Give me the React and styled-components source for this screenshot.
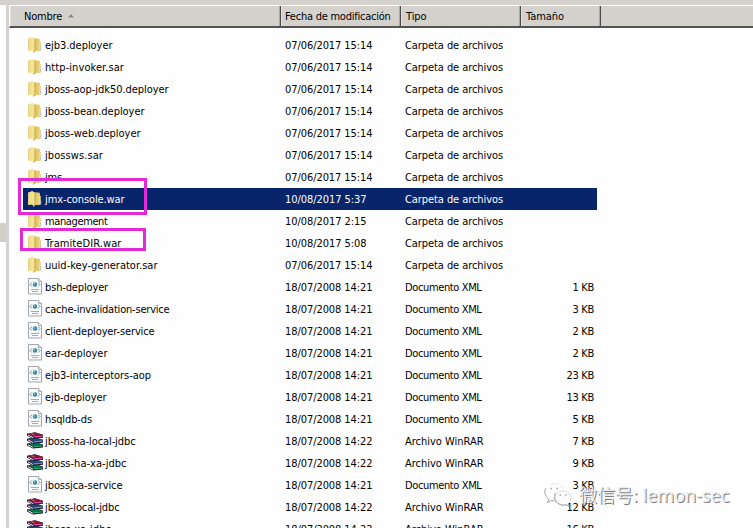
import React from 'react';
import styled, { createGlobalStyle } from 'styled-components';

const FONT = '"DejaVu Sans Condensed", "DejaVu Sans", sans-serif';

const GlobalStyle = createGlobalStyle`
  body { margin: 0; overflow: hidden; background: #fefefe; }
  *, *::before, *::after { box-sizing: border-box; }
`;

const Window = styled.div`
  position: relative;
  width: 753px;
  height: 528px;
  overflow: hidden;
  display: flex;
  flex-direction: column;
  background: #fefefe;
  color: #000;
  font: 11px/22px ${FONT};
  font-stretch: condensed;
`;

const TopEdge = styled.div`
  flex: none;
  height: 5px;
  background: #d5d2ce;
`;

const Body = styled.div`
  flex: 1;
  display: flex;
  min-height: 0;
`;

const NavPane = styled.div`
  flex: none;
  width: 6px;
  padding-top: 218px;
`;

const NavMark = styled.div`
  height: 19px;
  background: #d2cfcb;
`;

const Splitter = styled.div`
  flex: none;
  width: 3px;
  background: #d3d3d3;
`;

const FileList = styled.div`
  flex: 1;
  min-width: 0;
`;

const Header = styled.div`
  display: flex;
  height: 23px;
  background: #d5d2ce;
  border-top: 1px solid #fff;
  border-left: 1px solid #fff;
  border-bottom: 2px solid #555351;
`;

const HeaderCell = styled.div`
  flex: none;
  display: flex;
  align-items: center;
  width: ${(p) => p.$width}px;
  padding-top: 2px;
  padding-left: ${(p) => p.$pad}px;
  border-right: 1px solid #4b4947;
  box-shadow: inset 1px 0 #e6e4e1, inset -1px 0 #aaa7a3;
`;

const SortArrow = styled.svg`
  margin-left: 6px;
  margin-top: -3px;
`;

const Rows = styled.div`
  padding: 6px 0 0 14px;
`;

const Row = styled.div`
  display: grid;
  grid-template-columns: 262px 120px 120px 72px;
  width: 574px;
  height: 22px;
  line-height: 24px;
  color: ${(p) => (p.$selected ? '#fff' : '#000')};
  background: ${(p) => (p.$selected ? '#08246b' : 'transparent')};
`;

const NameCell = styled.div`
  display: flex;
  height: 24px;
`;

const Cell = styled.div`
  text-align: ${(p) => p.$align || 'left'};
  padding-right: ${(p) => (p.$align ? 3 : 0)}px;
`;

const IconBox = styled.div`
  flex: none;
  display: flex;
  align-items: flex-start;
  width: 22px;
  padding-top: 2px;
  padding-left: ${(p) => p.$pad}px;
`;

const Label = styled.span`
  white-space: pre;
`;

const Highlight = styled.div`
  position: absolute;
  left: ${(p) => p.$x}px;
  top: ${(p) => p.$y}px;
  width: ${(p) => p.$w}px;
  height: ${(p) => p.$h}px;
  border: 3px solid #e329d9;
`;

const Watermark = styled.div`
  position: absolute;
  left: 543px;
  top: 481px;
  display: flex;
  align-items: center;
  height: 28px;
`;

const WatermarkText = styled.span`
  margin-left: 7px;
  white-space: pre;
  font: 18px/28px "Noto Sans", "Noto Sans CJK SC", sans-serif;
  font-stretch: normal;
  color: #ececec;
  text-shadow: 1px 1px 0 #7d7d7d;
`;

const pen = document.createElement('canvas').getContext('2d');

/* Tracks a label so that its text takes the given width. */
function Text({ children, w }) {
  pen.font = `condensed 11px ${FONT}`;
  const natural = pen.measureText(children).width;
  return <Label style={{ letterSpacing: `${(w - natural) / children.length}px` }}>{children}</Label>;
}

function FolderIcon() {
  return (
    <svg width="14" height="17" viewBox="0 0 14 17">
      <path d="M0 2.5 5 1v13.500L0 15z" fill="#f0df8e" />
      <path d="M.4 3v11.500" stroke="#dccb86" strokeWidth=".8" />
      <path d="M6 2.500h5l1 1v10.500l-1 1H6z" fill="#e8cf72" />
      <path d="M10.400 5.500 12.600 6v8l-2.200 1z" fill="#f0dc8a" stroke="#d9c27a" strokeWidth=".5" />
      <path d="M3.200 1.200 7.200 2.500v12.500L5.500 16.500 3.800 14z" fill="#f5e493" />
      <path d="M7 2.500v12.500L5.400 16.400" fill="none" stroke="#c4a544" strokeWidth="1.100" />
      <path d="M8.800 3.500v10" stroke="#dfc25d" strokeWidth=".8" />
      <path d="M12.700 10.500v4" stroke="#b4cbc8" />
    </svg>
  );
}

function XmlIcon() {
  return (
    <svg width="14" height="17" viewBox="0 0 14 17">
      <path d="M.5.5h10l3 3v12.500H.5z" fill="#f8fafb" stroke="#a3a7aa" />
      <path d="M10.500.5v3h3" fill="#e2e5e7" stroke="#a8adb0" />
      <path d="M3.800 4.500 2 6.500l1.800 2M10.200 4.500l1.800 2-1.800 2" fill="none" stroke="#758cab" />
      <circle cx="7" cy="6.500" r="2.200" fill="#398194" />
      <circle cx="6.400" cy="6" r=".9" fill="#7ec7b9" />
      <path d="M3 11.500h8M4 13.500h6" stroke="#a7abb0" />
    </svg>
  );
}

function Book({ y, cover, shine }) {
  return (
    <g transform={`translate(0 ${y})`}>
      <path d="M0 1.500 8 0 16 2.500V5.500L6 6.500 0 3.500z" fill="#271a28" />
      <path d="M1 1.500 8 .3 15.500 2.500 6 4z" fill={cover} />
      <path d="M1 2.700 6 5.300" stroke="#eee8ed" strokeWidth="1" />
      <path d="M6.500 4.600 15.500 3.800" stroke={shine} strokeWidth="1.300" />
    </g>
  );
}

function RarIcon() {
  return (
    <svg width="16" height="17" viewBox="0 0 16 17">
      <Book y={10} cover="#08784f" shine="#30a978" />
      <Book y={5.200} cover="#24447e" shine="#3aa4df" />
      <Book y={0.300} cover="#8d1735" shine="#e04bb0" />
      <path d="M4 1.600 7.500 3" stroke="#c48a70" strokeWidth=".8" />
    </svg>
  );
}

const ICONS = { folder: FolderIcon, xml: XmlIcon, rar: RarIcon };
const TYPES = {
  folder: ['Carpeta de archivos', 98],
  xml: ['Documento XML', 76.5],
  rar: ['Archivo WinRAR', 78.5],
};

const FILES = [
  ['folder', 'ejb3.deployer', 67.5, '07/06/2017 15:14'],
  ['folder', 'http-invoker.sar', 79, '07/06/2017 15:14'],
  ['folder', 'jboss-aop-jdk50.deployer', 123.5, '07/06/2017 15:14'],
  ['folder', 'jboss-bean.deployer', 99.5, '07/06/2017 15:14'],
  ['folder', 'jboss-web.deployer', 95.5, '07/06/2017 15:14'],
  ['folder', 'jbossws.sar', 58, '07/06/2017 15:14'],
  ['folder', 'jms', 17, '07/06/2017 15:14'],
  ['folder', 'jmx-console.war', 79.5, '10/08/2017 5:37'],
  ['folder', 'management', 62.5, '10/08/2017 2:15'],
  ['folder', 'TramiteDIR.war', 76.5, '10/08/2017 5:08'],
  ['folder', 'uuid-key-generator.sar', 112.5, '07/06/2017 15:14'],
  ['xml', 'bsh-deployer', 63, '18/07/2008 14:21', '1 KB'],
  ['xml', 'cache-invalidation-service', 124.5, '18/07/2008 14:21', '3 KB'],
  ['xml', 'client-deployer-service', 109.5, '18/07/2008 14:21', '2 KB'],
  ['xml', 'ear-deployer', 62.5, '18/07/2008 14:21', '2 KB'],
  ['xml', 'ejb3-interceptors-aop', 106, '18/07/2008 14:21', '23 KB'],
  ['xml', 'ejb-deployer', 61.5, '18/07/2008 14:21', '13 KB'],
  ['xml', 'hsqldb-ds', 47, '18/07/2008 14:21', '5 KB'],
  ['rar', 'jboss-ha-local-jdbc', 90.5, '18/07/2008 14:22', '7 KB'],
  ['rar', 'jboss-ha-xa-jdbc', 81.5, '18/07/2008 14:22', '9 KB'],
  ['xml', 'jbossjca-service', 77.5, '18/07/2008 14:21', '3 KB'],
  ['rar', 'jboss-local-jdbc', 74.5, '18/07/2008 14:22', '12 KB'],
  ['rar', 'jboss-xa-jdbc', 66, '18/07/2008 14:22', '16 KB'],
];

function FileRow({ file }) {
  const [kind, name, width, date, size] = file;
  const Icon = ICONS[kind];
  return (
    <Row $selected={name === 'jmx-console.war'}>
      <NameCell>
        <IconBox $pad={kind === 'rar' ? 4 : 5}><Icon /></IconBox>
        <Text w={width}>{name}</Text>
      </NameCell>
      <Cell><Text w={date.length === 16 ? 87.5 : 81.5}>{date}</Text></Cell>
      <Cell><Text w={TYPES[kind][1]}>{TYPES[kind][0]}</Text></Cell>
      <Cell $align="right">{size && <Text w={size.length === 5 ? 27.5 : 21.5}>{size}</Text>}</Cell>
    </Row>
  );
}

function ChatLogo() {
  return (
    <svg width="29" height="28" viewBox="0 0 29 28" fill="#fdfdfd" stroke="#a0a0a0" strokeWidth=".8">
      <path d="M3 7C.8 10 1.500 15 5.800 18L4.500 21.500l4-2 3 .4" stroke="#8f8f8f" />
      <path d="M8 3.500c4-1.800 10-.5 12 4" fill="none" stroke="#cfcfcf" strokeDasharray="3 2" />
      <path d="M20 10c-4.800 0-8.500 3-8.500 7s3.700 7.200 8.500 7.200c1 0 2-.1 3-.5l3 1.600-.8-2.700c1.900-1.300 3-3.300 3-5.600 0-4-3.600-7-8.200-7z" stroke="#cfcfcf" />
      <path d="M12.500 12C10.500 16 12 23 20 24.200c1 0 2-.1 3-.5l3 1.600-.8-2.700" fill="none" stroke="#8f8f8f" />
      <path d="M7.500 7.500h1.500M13.500 7.500H15M16.500 14H18M22 14h1.500" strokeWidth="1.300" />
    </svg>
  );
}

export default function App() {
  return (
    <Window>
      <GlobalStyle />
      <TopEdge />
      <Body>
        <NavPane><NavMark /></NavPane>
        <Splitter />
        <FileList>
          <Header>
            <HeaderCell $width={271} $pad={14}>
              <Text w={38}>Nombre</Text>
              <SortArrow width="6" height="4" viewBox="0 0 6 4"><path d="M0 3.500 3 .3 6 3.500z" fill="#87847f" /></SortArrow>
            </HeaderCell>
            <HeaderCell $width={120} $pad={4}><Text w={105.5}>Fecha de modificación</Text></HeaderCell>
            <HeaderCell $width={120} $pad={5}><Text w={20.5}>Tipo</Text></HeaderCell>
            <HeaderCell $width={80} $pad={5}><Text w={38}>Tamaño</Text></HeaderCell>
          </Header>
          <Rows>
            {FILES.map((file) => <FileRow key={file[1]} file={file} />)}
          </Rows>
        </FileList>
      </Body>
      <Highlight $x={18} $y={178} $w={129} $h={37} />
      <Highlight $x={20} $y={228} $w={126} $h={23} />
      <Watermark>
        <ChatLogo />
        <WatermarkText>微信号: lemon-sec</WatermarkText>
      </Watermark>
    </Window>
  );
}
